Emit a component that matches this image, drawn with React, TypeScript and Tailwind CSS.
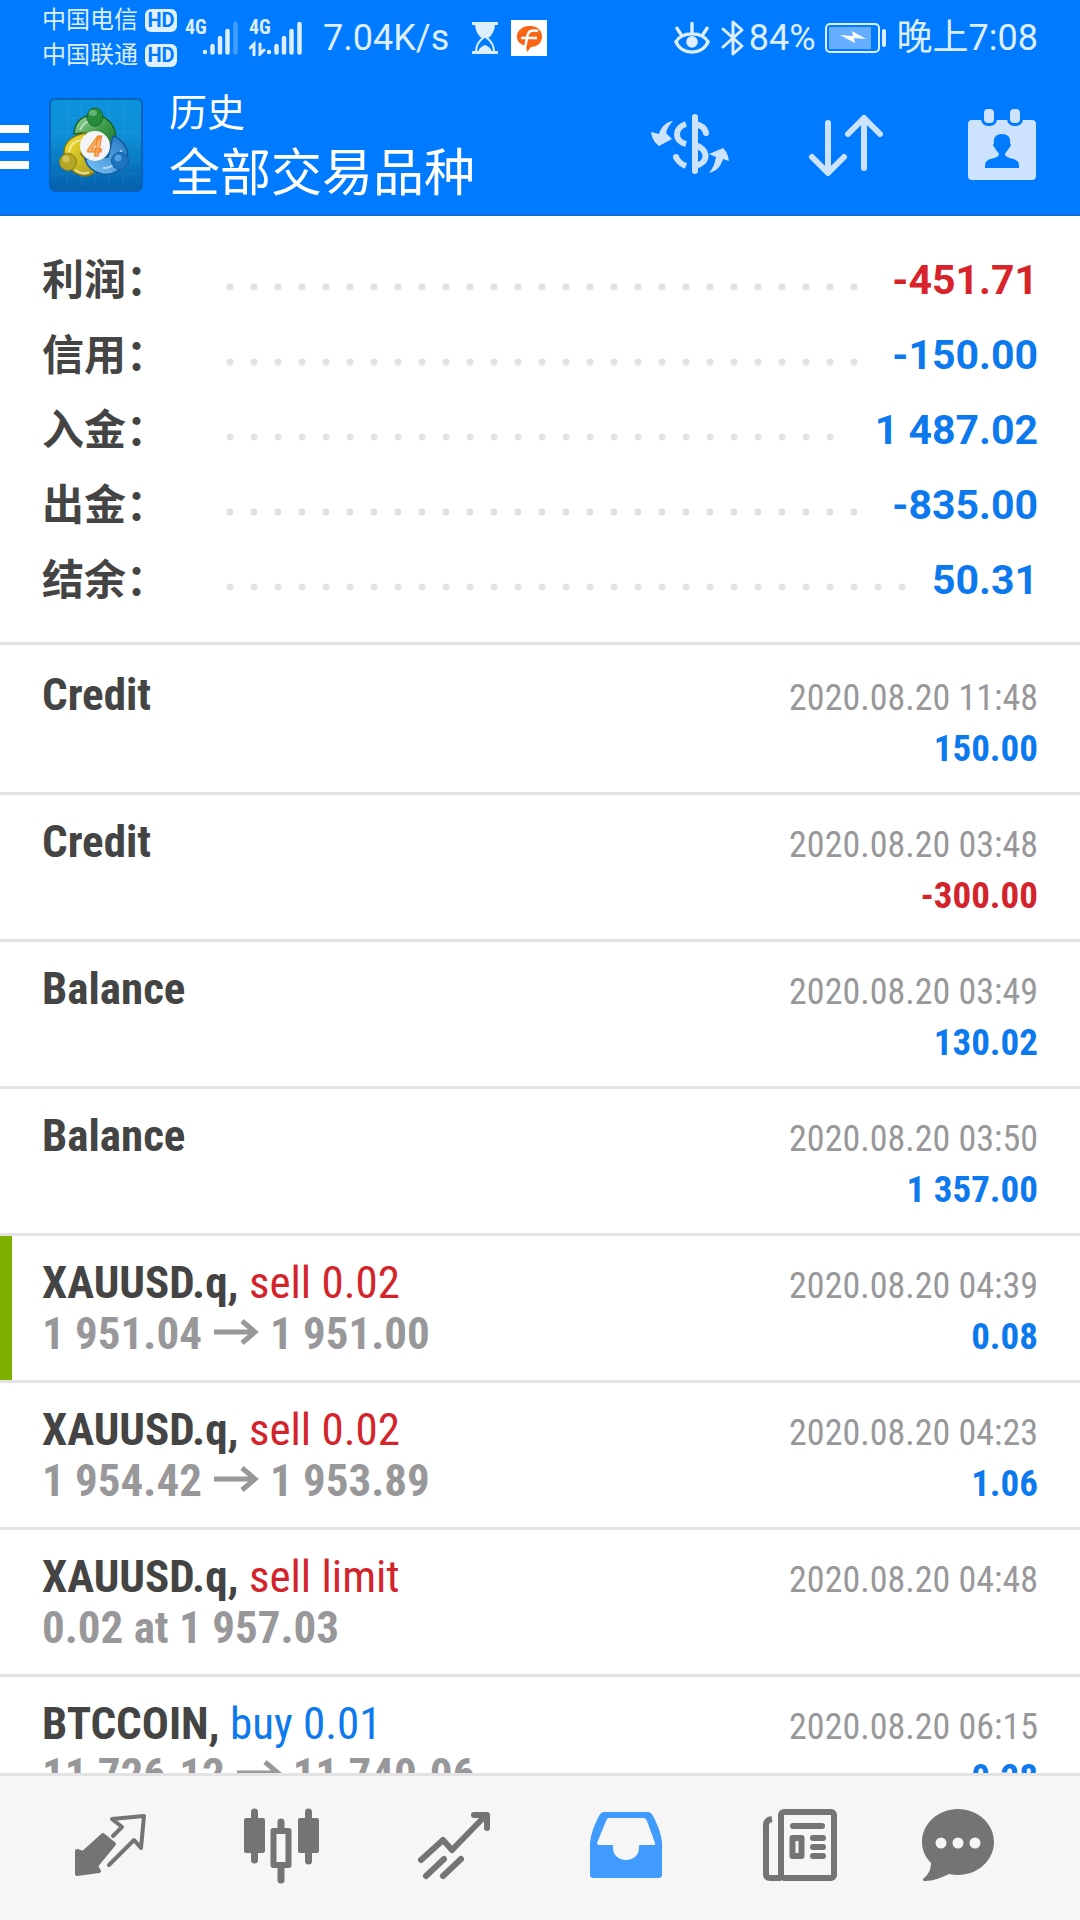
import React from 'react';
import clsx from 'clsx';

type Deal = {
  title: string;
  action?: string;
  side?: 'buy' | 'sell';
  from?: string;
  to?: string;
  note?: string;
  time: string;
  profit?: string;
  marked?: boolean;
};

const totals = [
  { label: '利润', value: '-451.71', negative: true },
  { label: '信用', value: '-150.00' },
  { label: '入金', value: '1 487.02' },
  { label: '出金', value: '-835.00' },
  { label: '结余', value: '50.31' },
];

const deals: Deal[] = [
  { title: 'Credit', time: '2020.08.20 11:48', profit: '150.00' },
  { title: 'Credit', time: '2020.08.20 03:48', profit: '-300.00' },
  { title: 'Balance', time: '2020.08.20 03:49', profit: '130.02' },
  { title: 'Balance', time: '2020.08.20 03:50', profit: '1 357.00' },
  { title: 'XAUUSD.q', action: 'sell 0.02', side: 'sell', from: '1 951.04', to: '1 951.00', time: '2020.08.20 04:39', profit: '0.08', marked: true },
  { title: 'XAUUSD.q', action: 'sell 0.02', side: 'sell', from: '1 954.42', to: '1 953.89', time: '2020.08.20 04:23', profit: '1.06' },
  { title: 'XAUUSD.q', action: 'sell limit', side: 'sell', note: '0.02 at 1 957.03', time: '2020.08.20 04:48' },
  { title: 'BTCCOIN', action: 'buy 0.01', side: 'buy', from: '11 726.12', to: '11 740.06', time: '2020.08.20 06:15', profit: '0.28' },
];

function Carrier({ name }: { name: string }) {
  return (
    <div className="flex h-[35px] items-center gap-[7px]">
      <span className="text-[24px] leading-[35px]">{name}</span>
      <span className="flex h-[23px] w-[32px] items-center justify-center rounded-md bg-[#e0f0ff] font-['Roboto'] text-[20px] font-bold leading-none text-[#007aff]">
        HD
      </span>
    </div>
  );
}

function Signal({ data }: { data?: boolean }) {
  return (
    <div className="relative h-[36px] w-[56px]">
      <span className="absolute left-0 top-0 font-['Roboto_Condensed'] text-[20px] font-bold leading-[14px]">4G</span>
      <svg viewBox="0 0 56 36" className="h-full w-full" stroke="currentColor" strokeWidth="4.500" strokeLinecap="round">
        <path d="M20 32v0M27.500 26v6.500M35 18v14.500M42.500 11v21.500" />
        <path d="M50.500 4v28.500" opacity={data ? 1 : 0.3} />
        {data && <path d="M1 28l4-4v11M11 24v10l4-4" strokeWidth="3" fill="none" />}
      </svg>
    </div>
  );
}

function StatusBar() {
  return (
    <div className="flex h-[75px] items-center justify-between px-[42px] text-[#dceeff]">
      <div className="flex items-center">
        <div>
          <Carrier name="中国电信" />
          <Carrier name="中国联通" />
        </div>
        <div className="ml-2 flex gap-2">
          <Signal />
          <Signal data />
        </div>
        <span className="ml-[18px] text-[36px] leading-[42px]">7.04K/s</span>
        <svg viewBox="0 0 26 34" className="ml-[23px] h-[34px] w-[26px]" fill="none" stroke="currentColor" strokeWidth="2">
          <path d="M1 2.500h24M1 31.500h24" strokeWidth="3" strokeLinecap="round" />
          <path d="M4 3h18c0 7-3 11-7 14 4 3 7 7 7 14H4c0-7 3-11 7-14C7 14 4 10 4 3z" />
          <path d="M4 3h18c0 7-3 11-7 14h-4C7 14 4 10 4 3zM6 31c1-4 4-6 7-7 3 1 6 3 7 7z" fill="currentColor" stroke="none" />
        </svg>
        <svg viewBox="0 0 36 36" className="ml-[13px] size-[36px]">
          <rect width="36" height="36" fill="#fff" />
          <path d="M18 6c8-1 14 5 13 12-1 6-6 9-11 9l-4 5-1-6C9 25 5 20 6 15c1-5 6-9 12-9z" fill="#fa6515" />
          <path d="M14 27c2-5 1-9 3-13 1-3 5-4 10-3M10 18h16" fill="none" stroke="#fff" strokeWidth="2.500" />
        </svg>
      </div>
      <div className="flex items-center">
        <svg viewBox="0 0 37 36" className="size-[36px]" fill="none" stroke="currentColor" strokeWidth="3.500" strokeLinecap="round">
          <path d="M2 22C8 11 29 11 35 22 29 36 8 36 2 22zM18.500 3v9M3 8l4 6M34 8l-4 6" />
          <circle cx="18.500" cy="22" r="6" fill="currentColor" stroke="none" />
        </svg>
        <svg viewBox="0 0 24 36" className="ml-[11px] h-[36px] w-[24px]" fill="none" stroke="currentColor" strokeWidth="3" strokeLinejoin="round" strokeLinecap="round">
          <path d="M2 9l19 17-9 8V2l9 8L2 27" />
        </svg>
        <span className="ml-1 text-[36px] leading-[42px]">84%</span>
        <svg viewBox="0 0 62 32" className="ml-[9px] h-[32px] w-[62px]">
          <rect x="1" y="2" width="53" height="28" rx="4" fill="none" stroke="currentColor" strokeWidth="2" />
          <rect x="4" y="5" width="42" height="22" fill="#66aeff" />
          <path d="M15 13l13 1-1-5 14 8-12-1 1 5z" fill="#fff" />
          <path d="M59 9v14" stroke="currentColor" strokeWidth="4" strokeLinecap="round" />
        </svg>
        <span className="ml-[10px] text-[36px] leading-[42px]">晚上7:08</span>
      </div>
    </div>
  );
}

function Logo() {
  return (
    <svg viewBox="0 0 94 94" className="size-[94px]">
      <defs>
        <linearGradient id="tile" x1="0" y1="0" x2="0" y2="1">
          <stop offset="0" stopColor="#0d93dd" />
          <stop offset="0.4" stopColor="#0c8fd6" />
          <stop offset="1" stopColor="#0460ac" />
        </linearGradient>
        <linearGradient id="green" x1="0" y1="0" x2="1" y2="1">
          <stop offset="0" stopColor="#9fdca0" />
          <stop offset="0.5" stopColor="#3d9a48" />
          <stop offset="1" stopColor="#1f6b2d" />
        </linearGradient>
        <linearGradient id="yellow" x1="0" y1="0" x2="1" y2="1">
          <stop offset="0" stopColor="#f8e42c" />
          <stop offset="1" stopColor="#aa9a1c" />
        </linearGradient>
        <linearGradient id="blue" x1="1" y1="0" x2="0" y2="1">
          <stop offset="0" stopColor="#2176c4" />
          <stop offset="1" stopColor="#7cc6f5" />
        </linearGradient>
      </defs>
      <rect x="1" y="1" width="92" height="92" rx="5" fill="url(#tile)" stroke="#0a62b8" strokeWidth="2" />
      <path d="M18 4v86M32 4v86M46 4v86M60 4v86M74 4v86M4 20h86M4 34h86M4 48h86M4 62h86M4 76h86" stroke="#fff" opacity="0.060" />
      <path d="M25 36C26 22 35 17 46 17s21 10 21 24c0 9-4 15-7 17L47 39 33 35z" fill="url(#green)" stroke="#17652a" strokeWidth="1.500" />
      <path d="M37 35c-12 2-21 8-22 18 0 14 10 24 20 25 5 0 9-2 11-5L32 56z" fill="url(#yellow)" stroke="#7f7512" strokeWidth="1.500" />
      <path d="M64 38c11 4 16 14 14 22-3 12-14 18-25 16-9-2-15-8-17-15l23-2z" fill="url(#blue)" stroke="#145a9e" strokeWidth="1.500" />
      <path d="M31 32c2-6 8-10 14-10M20 54c1-7 6-11 12-12M72 52c0 12-9 18-18 18M26 72c5 4 10 4 14 2" fill="none" stroke="#fff" strokeWidth="2" opacity="0.550" />
      <ellipse cx="46" cy="19" rx="8" ry="9" fill="#278b3c" stroke="#17652a" />
      <ellipse cx="44" cy="15" rx="4" ry="3" fill="#7cc787" opacity="0.700" />
      <circle cx="19" cy="64" r="8.500" fill="#b5a726" stroke="#8a7f1b" />
      <circle cx="17" cy="61" r="3.500" fill="#ddd36a" opacity="0.700" />
      <circle cx="71" cy="63" r="8.500" fill="#1e74bf" stroke="#145a9e" />
      <circle cx="69" cy="60" r="3.500" fill="#6bb2e8" opacity="0.700" />
      <circle cx="46" cy="48" r="15" fill="#f2f4f8" />
      <text x="46" y="58" textAnchor="middle" className="font-['Roboto'] text-[27px] font-bold italic" fill="#fbb870" stroke="#f07f1c">
        4
      </text>
    </svg>
  );
}

function Header() {
  return (
    <header className="shrink-0 border-b-2 border-[#0a6ce0] bg-[#007aff] text-white">
      <StatusBar />
      <div className="flex h-[139px] items-center">
        <button aria-label="Menu" className="flex w-[49px] flex-col gap-2.5 pt-1">
          <span className="h-2 w-[29px] bg-white" />
          <span className="h-2 w-[29px] bg-white" />
          <span className="h-2 w-[29px] bg-white" />
        </button>
        <Logo />
        <div className="flex-1 pl-[26px] pt-0.5">
          <p className="text-[38px] leading-[56px]">历史</p>
          <h1 className="text-[51px] leading-[66px]">全部交易品种</h1>
        </div>
        <div className="flex pb-0.5 text-[#cde3fd]">
          <button aria-label="Symbols" className="flex w-[156px] justify-center">
            <svg viewBox="0 0 96 96" className="size-[96px]" fill="none" stroke="currentColor" strokeWidth="6">
              <path d="M53 21v54" strokeLinecap="round" />
              <path d="M44 28C32 32 32 45 44 48" />
              <path d="M34 61C36 66 39 68 44 70" />
              <path d="M34 61v0M64 37v0" strokeLinecap="round" />
              <path d="M53 28C59 29 63 32 64 37" />
              <path d="M53 49C67 53 67 67 53 70" />
              <path d="M9 36l8 2c2-7 7-12 14-13-4 4-6 8-7 12l6 6-13 7c-5-4-7-8-8-14zM87 65c-1-6-2-9-6-13l-14 6 7 3c-1 6-3 11-7 16 8-2 12-7 14-14z" fill="currentColor" stroke="none" />
            </svg>
          </button>
          <button aria-label="Sort" className="flex w-[156px] justify-center">
            <svg viewBox="0 0 96 96" className="size-[96px]" fill="none" stroke="currentColor" strokeWidth="6" strokeLinecap="round" strokeLinejoin="round">
              <path d="M30 27v49M14 61l16 16 16-16M66 72V22M50 38l16-16 16 16" />
            </svg>
          </button>
          <button aria-label="Period" className="flex w-[156px] justify-center">
            <svg viewBox="0 0 96 96" className="size-[96px]">
              <rect x="14" y="24" width="68" height="60" rx="4" fill="currentColor" />
              <rect x="27" y="10" width="16" height="20" rx="7" fill="#007aff" />
              <rect x="53" y="10" width="16" height="20" rx="7" fill="#007aff" />
              <rect x="30" y="13" width="10" height="14" rx="4" fill="currentColor" />
              <rect x="56" y="13" width="10" height="14" rx="4" fill="currentColor" />
              <path d="M48 38c6 0 9 4 8 9 2 2 0 4-1 5-1 3-4 4-4 7 3 4 9 3 12 6 2 1 2 4 2 7H31c0-3 0-6 2-7 3-3 9-2 12-6 0-3-3-4-4-7-1-1-3-3-1-5-1-5 2-9 8-9z" fill="#007aff" />
            </svg>
          </button>
        </div>
      </div>
    </header>
  );
}

function Totals() {
  return (
    <dl className="border-b-[3px] border-[#e3e3e3] px-[42px] pb-[24px] pt-[27px] font-bold leading-[75px]">
      {totals.map((t) => (
        <div key={t.label} className="flex">
          <dt className="w-[184px] text-[42px] text-[#444]">{t.label}：</dt>
          <dd className="flex flex-1 gap-[25px] text-[41px]">
            <span className="mt-10 h-2 flex-1 bg-[radial-gradient(circle_at_4px_4px,#e2e2e2_3px,transparent_4px)] bg-[length:24px_8px] bg-repeat-x" />
            <span className={t.negative ? 'text-[#d8232a]' : 'text-[#0d79ee]'}>{t.value}</span>
          </dd>
        </div>
      ))}
    </dl>
  );
}

function DealRow({ deal }: { deal: Deal }) {
  return (
    <li className="relative border-b-[3px] border-[#e3e3e3] px-[42px] pb-[21px] pt-[21px] font-['Roboto_Condensed',sans-serif] text-[45px] leading-[51px] first:pt-[24px]">
      {deal.marked && <span className="absolute inset-y-0 left-0 w-3 bg-[#7fb000]" />}
      <div className="flex h-[51px] items-baseline justify-between">
        <p className="text-[#444]">
          <b>{deal.title}{deal.action && ','}</b>
          {deal.action && (
            <span className={deal.side === 'sell' ? 'text-[#d3242b]' : 'text-[#0d79ee]'}> {deal.action}</span>
          )}
        </p>
        <time className="text-[36px] text-[#98989a]">{deal.time}</time>
      </div>
      <div className="flex h-[51px] items-baseline justify-between font-bold">
        <p className="text-[#98989a]">
          {deal.from && (
            <>
              {deal.from}
              <svg viewBox="0 0 46 34" className="mx-[11px] inline h-[34px] w-[46px] align-baseline" fill="none" stroke="currentColor" strokeWidth="5">
                <path d="M1 17h42M29 6l13 11-13 11" />
              </svg>
              {deal.to}
            </>
          )}
          {deal.note}
          {/* keeps the line's baseline when there are no details */}
          {!deal.from && !deal.note && '\u00a0'}
        </p>
        <p className={clsx('text-[37px]', deal.profit?.startsWith('-') ? 'text-[#d3242b]' : 'text-[#0d79ee]')}>{deal.profit}</p>
      </div>
    </li>
  );
}

function Tab({ label, active, children }: { label: string; active?: boolean; children: React.ReactNode }) {
  return (
    <button
      aria-label={label}
      aria-current={active ? 'page' : undefined}
      className={clsx('flex flex-1 items-center justify-center', active ? 'text-[#419bff]' : 'text-[#747474]')}
    >
      <svg viewBox="0 0 96 96" className="size-[96px]" fill="none" stroke="currentColor" strokeWidth="6" strokeLinecap="round" strokeLinejoin="round">
        {children}
      </svg>
    </button>
  );
}

function TabBar() {
  return (
    <nav className="flex h-[147px] shrink-0 border-t-[3px] border-[#e3e3e3] bg-[#f6f6f6] px-6 pb-1">
      <Tab label="Quotes">
        <path d="M41 37L52 46 34 68l3 5-22 3V53l6 2z" fill="currentColor" strokeWidth="4" />
        <path d="M51 38l9-9-10-8 32-3-3 32-7-8-25 25" strokeWidth="4" />
      </Tab>
      <Tab label="Charts">
        <path d="M20.500 14v48M47 24v8M47 68v14M74.500 14v49" strokeWidth="7" />
        <rect x="12" y="22" width="17" height="31" fill="currentColor" strokeWidth="4" />
        <rect x="66" y="22" width="17" height="31" fill="currentColor" strokeWidth="4" />
        <rect x="39.500" y="33" width="15" height="34" strokeWidth="6" />
      </Tab>
      <Tab label="Trade">
        <path d="M15 62l22-20 9 10 34-35M68 17h13v13M20 78l18-17M37 78l18-17" />
      </Tab>
      <Tab label="History" active>
        <path
          d="M26 14h44q3 0 5 4c5 10 8 17 9 27v32q0 3-4 3H16q-4 0-4-3V45c1-10 4-17 9-27q2-4 5-4zm5 6q-2 0-3 3l-9 22q0 2 2 2h14v3c0 16 26 16 26 0v-3h14q3 0 2-2l-8-22q-1-3-4-3z"
          fill="currentColor"
          fillRule="evenodd"
          stroke="none"
        />
      </Tab>
      <Tab label="News">
        <rect x="31" y="14" width="53" height="66" rx="3" />
        <path d="M22 21q-6 1-6 6v49q0 4 4 4h11" strokeLinecap="butt" />
        <path d="M43 28h29M63 40h10M63 49h10M63 58h10" />
        <rect x="42.500" y="40" width="9" height="18" strokeWidth="6" />
      </Tab>
      <Tab label="Messages">
        <path
          d="M36 11c20 0 36 15 36 33S56 77 36 77q-5 0-9-1c-8 4-16 7-24 7-2 0-3-1-1-3 5-4 7-9 7-15C3 59 0 52 0 44c0-18 16-33 36-33z"
          fill="currentColor"
          stroke="none"
        />
        <path d="M19 45v0M36 45v0M53 45v0" stroke="#f6f6f6" strokeWidth="11" />
      </Tab>
    </nav>
  );
}

export default function App() {
  return (
    <div className="flex h-screen flex-col bg-white font-['Roboto','Noto_Sans_CJK_SC',sans-serif]">
      <Header />
      <main className="min-h-0 flex-1 overflow-hidden">
        <Totals />
        <ul>
          {deals.map((deal, i) => (
            <DealRow key={i} deal={deal} />
          ))}
        </ul>
      </main>
      <TabBar />
    </div>
  );
}
